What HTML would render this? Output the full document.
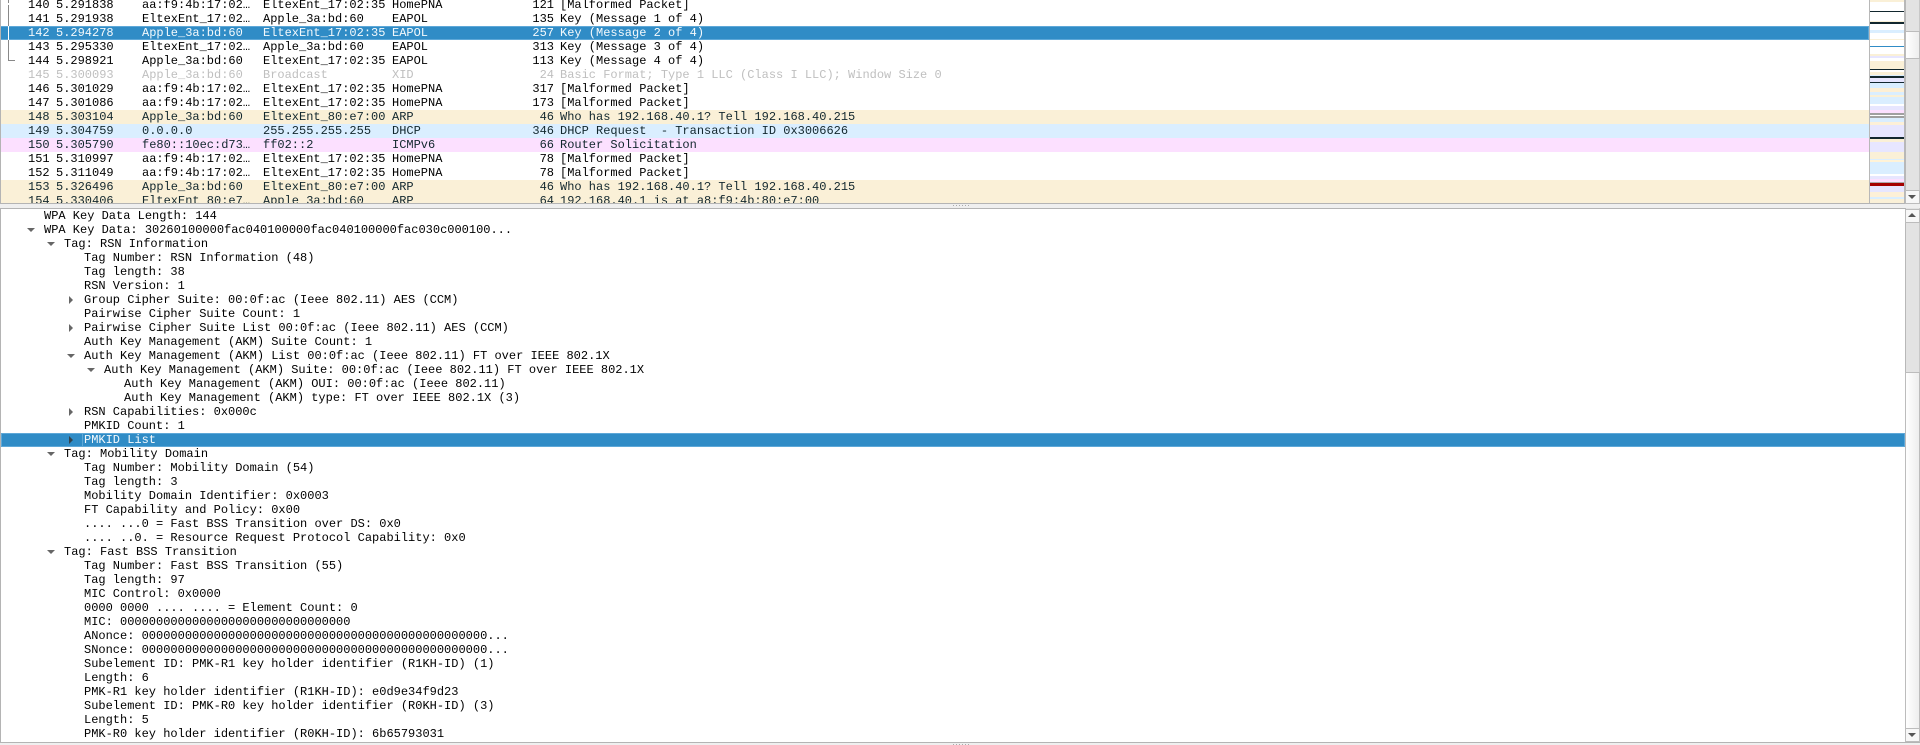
<!DOCTYPE html>
<html><head><meta charset="utf-8"><style>
html,body{margin:0;padding:0;width:1920px;height:745px;overflow:hidden;background:#efefef}
body{position:relative;font:12px/14px "Liberation Mono",monospace;color:#000}
div{position:absolute;box-sizing:border-box}
#pl{left:0;top:0;width:1869px;height:203px;overflow:hidden;background:#fff}
#pl .r{left:0;width:1869px;height:14px;white-space:pre}
.r span{position:absolute;top:0;white-space:pre}
.n{left:28px}.t{left:56px}.s{left:142px}.d{left:263px}.p{left:392px}.l{left:511px;width:43px;text-align:right}.i{left:560px}
.a{background:#faf0d7;color:#12272e}.h{background:#daeeff;color:#12272e}.c{background:#fce0ff;color:#12272e}
.g{color:#bfbfbf}
.sel{background:#308cc6;color:#f4f9fc;box-shadow:inset 0 0 0 1px #5ea8d8}
#dt{left:1px;top:209px;width:1904px;height:533px;overflow:hidden;background:#fff}
#dt p{position:absolute;margin:0;height:14px;white-space:pre;left:0;right:0}
.e1{padding-left:43px}.e2{padding-left:63px}.e3{padding-left:83px}.e4{padding-left:103px}.e5{padding-left:123px}
.dn::before{content:"";position:absolute;top:5px;border:solid transparent;border-width:4px 4px 0;border-top-color:#666}
.rt::before{content:"";position:absolute;top:3px;border:solid transparent;border-width:4px 0 4px 4px;border-left-color:#666}
.e1.dn::before{left:26px}.e2.dn::before{left:46px}.e3.dn::before{left:66px}.e4.dn::before{left:86px}
.e3.rt::before{left:68px}
.sel.rt::before{border-left-color:#33424c}
.sb{background:#e3e3e3;left:1905px;width:15px;border-left:1px solid #b8b8b8;border-right:1px solid #c8c8c8}
.btn{left:1905px;width:15px;height:14px;background:#f7f7f7;border:1px solid #bcbcbc}
.thumb{left:1905px;width:15px;background:linear-gradient(90deg,#fff,#eee);border:1px solid #bcbcbc}
.up::after,.down::after{content:"";position:absolute;left:2px;border:solid transparent}
.up::after{top:3px;border-width:0 4px 4px;border-bottom-color:#555}
.down::after{top:4px;border-width:4px 4px 0;border-top-color:#555}
.dot{width:1px;height:1px;background:#aaa}
</style></head><body>
<div id="pl">
<div class="r" style="top:-2px"><span class="n">140</span><span class="t">5.291838</span><span class="s">aa:f9:4b:17:02…</span><span class="d">EltexEnt_17:02:35</span><span class="p">HomePNA</span><span class="l">121</span><span class="i">[Malformed Packet]</span></div>
<div class="r" style="top:12px"><span class="n">141</span><span class="t">5.291938</span><span class="s">EltexEnt_17:02…</span><span class="d">Apple_3a:bd:60</span><span class="p">EAPOL</span><span class="l">135</span><span class="i">Key (Message 1 of 4)</span></div>
<div class="r sel" style="top:26px"><span class="n">142</span><span class="t">5.294278</span><span class="s">Apple_3a:bd:60</span><span class="d">EltexEnt_17:02:35</span><span class="p">EAPOL</span><span class="l">257</span><span class="i">Key (Message 2 of 4)</span></div>
<div class="r" style="top:40px"><span class="n">143</span><span class="t">5.295330</span><span class="s">EltexEnt_17:02…</span><span class="d">Apple_3a:bd:60</span><span class="p">EAPOL</span><span class="l">313</span><span class="i">Key (Message 3 of 4)</span></div>
<div class="r" style="top:54px"><span class="n">144</span><span class="t">5.298921</span><span class="s">Apple_3a:bd:60</span><span class="d">EltexEnt_17:02:35</span><span class="p">EAPOL</span><span class="l">113</span><span class="i">Key (Message 4 of 4)</span></div>
<div class="r g" style="top:68px"><span class="n">145</span><span class="t">5.300093</span><span class="s">Apple_3a:bd:60</span><span class="d">Broadcast</span><span class="p">XID</span><span class="l">24</span><span class="i">Basic Format; Type 1 LLC (Class I LLC); Window Size 0</span></div>
<div class="r" style="top:82px"><span class="n">146</span><span class="t">5.301029</span><span class="s">aa:f9:4b:17:02…</span><span class="d">EltexEnt_17:02:35</span><span class="p">HomePNA</span><span class="l">317</span><span class="i">[Malformed Packet]</span></div>
<div class="r" style="top:96px"><span class="n">147</span><span class="t">5.301086</span><span class="s">aa:f9:4b:17:02…</span><span class="d">EltexEnt_17:02:35</span><span class="p">HomePNA</span><span class="l">173</span><span class="i">[Malformed Packet]</span></div>
<div class="r a" style="top:110px"><span class="n">148</span><span class="t">5.303104</span><span class="s">Apple_3a:bd:60</span><span class="d">EltexEnt_80:e7:00</span><span class="p">ARP</span><span class="l">46</span><span class="i">Who has 192.168.40.1? Tell 192.168.40.215</span></div>
<div class="r h" style="top:124px"><span class="n">149</span><span class="t">5.304759</span><span class="s">0.0.0.0</span><span class="d">255.255.255.255</span><span class="p">DHCP</span><span class="l">346</span><span class="i">DHCP Request  - Transaction ID 0x3006626</span></div>
<div class="r c" style="top:138px"><span class="n">150</span><span class="t">5.305790</span><span class="s">fe80::10ec:d73…</span><span class="d">ff02::2</span><span class="p">ICMPv6</span><span class="l">66</span><span class="i">Router Solicitation</span></div>
<div class="r" style="top:152px"><span class="n">151</span><span class="t">5.310997</span><span class="s">aa:f9:4b:17:02…</span><span class="d">EltexEnt_17:02:35</span><span class="p">HomePNA</span><span class="l">78</span><span class="i">[Malformed Packet]</span></div>
<div class="r" style="top:166px"><span class="n">152</span><span class="t">5.311049</span><span class="s">aa:f9:4b:17:02…</span><span class="d">EltexEnt_17:02:35</span><span class="p">HomePNA</span><span class="l">78</span><span class="i">[Malformed Packet]</span></div>
<div class="r a" style="top:180px"><span class="n">153</span><span class="t">5.326496</span><span class="s">Apple_3a:bd:60</span><span class="d">EltexEnt_80:e7:00</span><span class="p">ARP</span><span class="l">46</span><span class="i">Who has 192.168.40.1? Tell 192.168.40.215</span></div>
<div class="r a" style="top:194px"><span class="n">154</span><span class="t">5.330406</span><span class="s">EltexEnt_80:e7…</span><span class="d">Apple_3a:bd:60</span><span class="p">ARP</span><span class="l">64</span><span class="i">192.168.40.1 is at a8:f9:4b:80:e7:00</span></div>
<div style="left:8px;top:0;width:1px;height:3px;background:#888"></div>
<div style="left:8px;top:5px;width:1px;height:21px;background:#888"></div>
<div style="left:8px;top:26px;width:1px;height:14px;background:#fff"></div>
<div style="left:8px;top:40px;width:1px;height:20px;background:#888"></div>
<div style="left:8px;top:60px;width:7px;height:1px;background:#888"></div>
</div>
<div style="left:0;top:0;width:1px;height:204px;background:#b4b4b4"></div>
<div style="left:0;top:203px;width:1906px;height:1px;background:#b4b4b4"></div>

<svg style="position:absolute;left:1869px;top:0" width="36" height="203" shape-rendering="crispEdges">
<rect width="36" height="203" fill="#fff"/>
<g>
<rect x="1" y="0" width="34" height="2" fill="#faf0d7"/>
<rect x="1" y="11" width="34" height="1" fill="#12272e"/>
<rect x="1" y="21" width="34" height="1" fill="#faf0d7"/>
<rect x="1" y="22" width="34" height="2" fill="#12272e"/>
<rect x="1" y="30" width="34" height="3" fill="#daeeff"/>
<rect x="1" y="39" width="34" height="1" fill="#faf0d7"/>
<rect x="1" y="46" width="34" height="1" fill="#308cc6"/>
<rect x="1" y="54" width="34" height="2" fill="#faf0d7"/>
<rect x="1" y="56" width="34" height="2" fill="#e7e6ff"/>
<rect x="1" y="61" width="34" height="8" fill="#faf0d7"/>
<rect x="1" y="69" width="34" height="1" fill="#12272e"/>
<rect x="1" y="72" width="34" height="3" fill="#faf0d7"/>
<rect x="1" y="75" width="34" height="1" fill="#daeeff"/>
<rect x="1" y="76" width="34" height="2" fill="#12272e"/>
<rect x="1" y="78" width="34" height="4" fill="#e7e6ff"/>
<rect x="1" y="82" width="34" height="1" fill="#12272e"/>
<rect x="1" y="83" width="34" height="5" fill="#daeeff"/>
<rect x="1" y="88" width="34" height="4" fill="#fdefd5"/>
<rect x="1" y="92" width="34" height="3" fill="#daeeff"/>
<rect x="1" y="95" width="34" height="2" fill="#faf0d7"/>
<rect x="1" y="97" width="34" height="7" fill="#daeeff"/>
<rect x="1" y="104" width="34" height="2" fill="#fff"/>
<rect x="1" y="106" width="34" height="4" fill="#e7e6ff"/>
<rect x="1" y="110" width="34" height="3" fill="#fce0ff"/>
<rect x="1" y="113" width="34" height="2" fill="#a0a0a0"/>
<rect x="1" y="116" width="34" height="2" fill="#a0a0a0"/>
<rect x="1" y="118" width="34" height="4" fill="#daeeff"/>
<rect x="1" y="122" width="34" height="3" fill="#fdf0d8"/>
<rect x="1" y="125" width="34" height="12" fill="#e7e6ff"/>
<rect x="1" y="137" width="34" height="2" fill="#12272e"/>
<rect x="1" y="139" width="34" height="3" fill="#faf0d7"/>
<rect x="1" y="142" width="34" height="10" fill="#e7e6ff"/>
<rect x="1" y="152" width="34" height="7" fill="#faf0d7"/>
<rect x="1" y="159" width="34" height="1" fill="#daeeff"/>
<rect x="1" y="160" width="34" height="2" fill="#fff3d8"/>
<rect x="1" y="162" width="34" height="12" fill="#daeeff"/>
<rect x="1" y="174" width="34" height="2" fill="#fff"/>
<rect x="1" y="176" width="34" height="3" fill="#e7e6ff"/>
<rect x="1" y="179" width="34" height="3" fill="#fce0ff"/>
<rect x="1" y="182" width="34" height="1" fill="#aaa"/>
<rect x="1" y="183" width="34" height="3" fill="#a40000"/>
<rect x="1" y="186" width="34" height="6" fill="#e7e6ff"/>
<rect x="1" y="192" width="34" height="5" fill="#fdf0d8"/>
<rect x="1" y="197" width="34" height="2" fill="#daeeff"/>
<rect x="1" y="199" width="34" height="4" fill="#faf0d7"/>
</g>
<rect x="0" y="0" width="1" height="203" fill="#b8b8b8"/>
<rect x="35" y="0" width="1" height="203" fill="#b8b8b8"/>
</svg>

<div class="sb" style="top:0;height:204px"></div>
<div class="thumb" style="top:31px;height:28px"></div>
<div class="btn down" style="top:190px"></div>

<div style="left:0;top:204px;width:1920px;height:4px;background:#efefef"></div>
<div class="dot" style="left:953px;top:205px"></div><div class="dot" style="left:956px;top:205px"></div><div class="dot" style="left:959px;top:205px"></div><div class="dot" style="left:962px;top:205px"></div><div class="dot" style="left:965px;top:205px"></div><div class="dot" style="left:968px;top:205px"></div>
<div style="left:0;top:208px;width:1906px;height:1px;background:#b4b4b4"></div>
<div style="left:0;top:208px;width:1px;height:535px;background:#b4b4b4"></div>

<div id="dt">
<p class="e1" style="top:0">WPA Key Data Length: 144</p>
<p class="e1 dn" style="top:14px">WPA Key Data: 30260100000fac040100000fac040100000fac030c000100...</p>
<p class="e2 dn" style="top:28px">Tag: RSN Information</p>
<p class="e3" style="top:42px">Tag Number: RSN Information (48)</p>
<p class="e3" style="top:56px">Tag length: 38</p>
<p class="e3" style="top:70px">RSN Version: 1</p>
<p class="e3 rt" style="top:84px">Group Cipher Suite: 00:0f:ac (Ieee 802.11) AES (CCM)</p>
<p class="e3" style="top:98px">Pairwise Cipher Suite Count: 1</p>
<p class="e3 rt" style="top:112px">Pairwise Cipher Suite List 00:0f:ac (Ieee 802.11) AES (CCM)</p>
<p class="e3" style="top:126px">Auth Key Management (AKM) Suite Count: 1</p>
<p class="e3 dn" style="top:140px">Auth Key Management (AKM) List 00:0f:ac (Ieee 802.11) FT over IEEE 802.1X</p>
<p class="e4 dn" style="top:154px">Auth Key Management (AKM) Suite: 00:0f:ac (Ieee 802.11) FT over IEEE 802.1X</p>
<p class="e5" style="top:168px">Auth Key Management (AKM) OUI: 00:0f:ac (Ieee 802.11)</p>
<p class="e5" style="top:182px">Auth Key Management (AKM) type: FT over IEEE 802.1X (3)</p>
<p class="e3 rt" style="top:196px">RSN Capabilities: 0x000c</p>
<p class="e3" style="top:210px">PMKID Count: 1</p>
<p class="e3 rt sel" style="top:224px">PMKID List</p>
<p class="e2 dn" style="top:238px">Tag: Mobility Domain</p>
<p class="e3" style="top:252px">Tag Number: Mobility Domain (54)</p>
<p class="e3" style="top:266px">Tag length: 3</p>
<p class="e3" style="top:280px">Mobility Domain Identifier: 0x0003</p>
<p class="e3" style="top:294px">FT Capability and Policy: 0x00</p>
<p class="e3" style="top:308px">.... ...0 = Fast BSS Transition over DS: 0x0</p>
<p class="e3" style="top:322px">.... ..0. = Resource Request Protocol Capability: 0x0</p>
<p class="e2 dn" style="top:336px">Tag: Fast BSS Transition</p>
<p class="e3" style="top:350px">Tag Number: Fast BSS Transition (55)</p>
<p class="e3" style="top:364px">Tag length: 97</p>
<p class="e3" style="top:378px">MIC Control: 0x0000</p>
<p class="e3" style="top:392px">0000 0000 .... .... = Element Count: 0</p>
<p class="e3" style="top:406px">MIC: 00000000000000000000000000000000</p>
<p class="e3" style="top:420px">ANonce: 000000000000000000000000000000000000000000000000...</p>
<p class="e3" style="top:434px">SNonce: 000000000000000000000000000000000000000000000000...</p>
<p class="e3" style="top:448px">Subelement ID: PMK-R1 key holder identifier (R1KH-ID) (1)</p>
<p class="e3" style="top:462px">Length: 6</p>
<p class="e3" style="top:476px">PMK-R1 key holder identifier (R1KH-ID): e0d9e34f9d23</p>
<p class="e3" style="top:490px">Subelement ID: PMK-R0 key holder identifier (R0KH-ID) (3)</p>
<p class="e3" style="top:504px">Length: 5</p>
<p class="e3" style="top:518px">PMK-R0 key holder identifier (R0KH-ID): 6b65793031</p>
<div style="left:81px;top:225px;width:1px;height:12px;background:#5ea8d8"></div>
</div>

<div class="sb" style="top:208px;height:535px"></div>
<div class="btn up" style="top:209px"></div>
<div class="thumb" style="top:372px;height:357px"></div>
<div class="btn down" style="top:728px"></div>

<div style="left:0;top:742px;width:1920px;height:1px;background:#b4b4b4"></div>
<div class="dot" style="left:953px;top:744px"></div><div class="dot" style="left:956px;top:744px"></div><div class="dot" style="left:959px;top:744px"></div><div class="dot" style="left:962px;top:744px"></div><div class="dot" style="left:965px;top:744px"></div><div class="dot" style="left:968px;top:744px"></div>
</body></html>
